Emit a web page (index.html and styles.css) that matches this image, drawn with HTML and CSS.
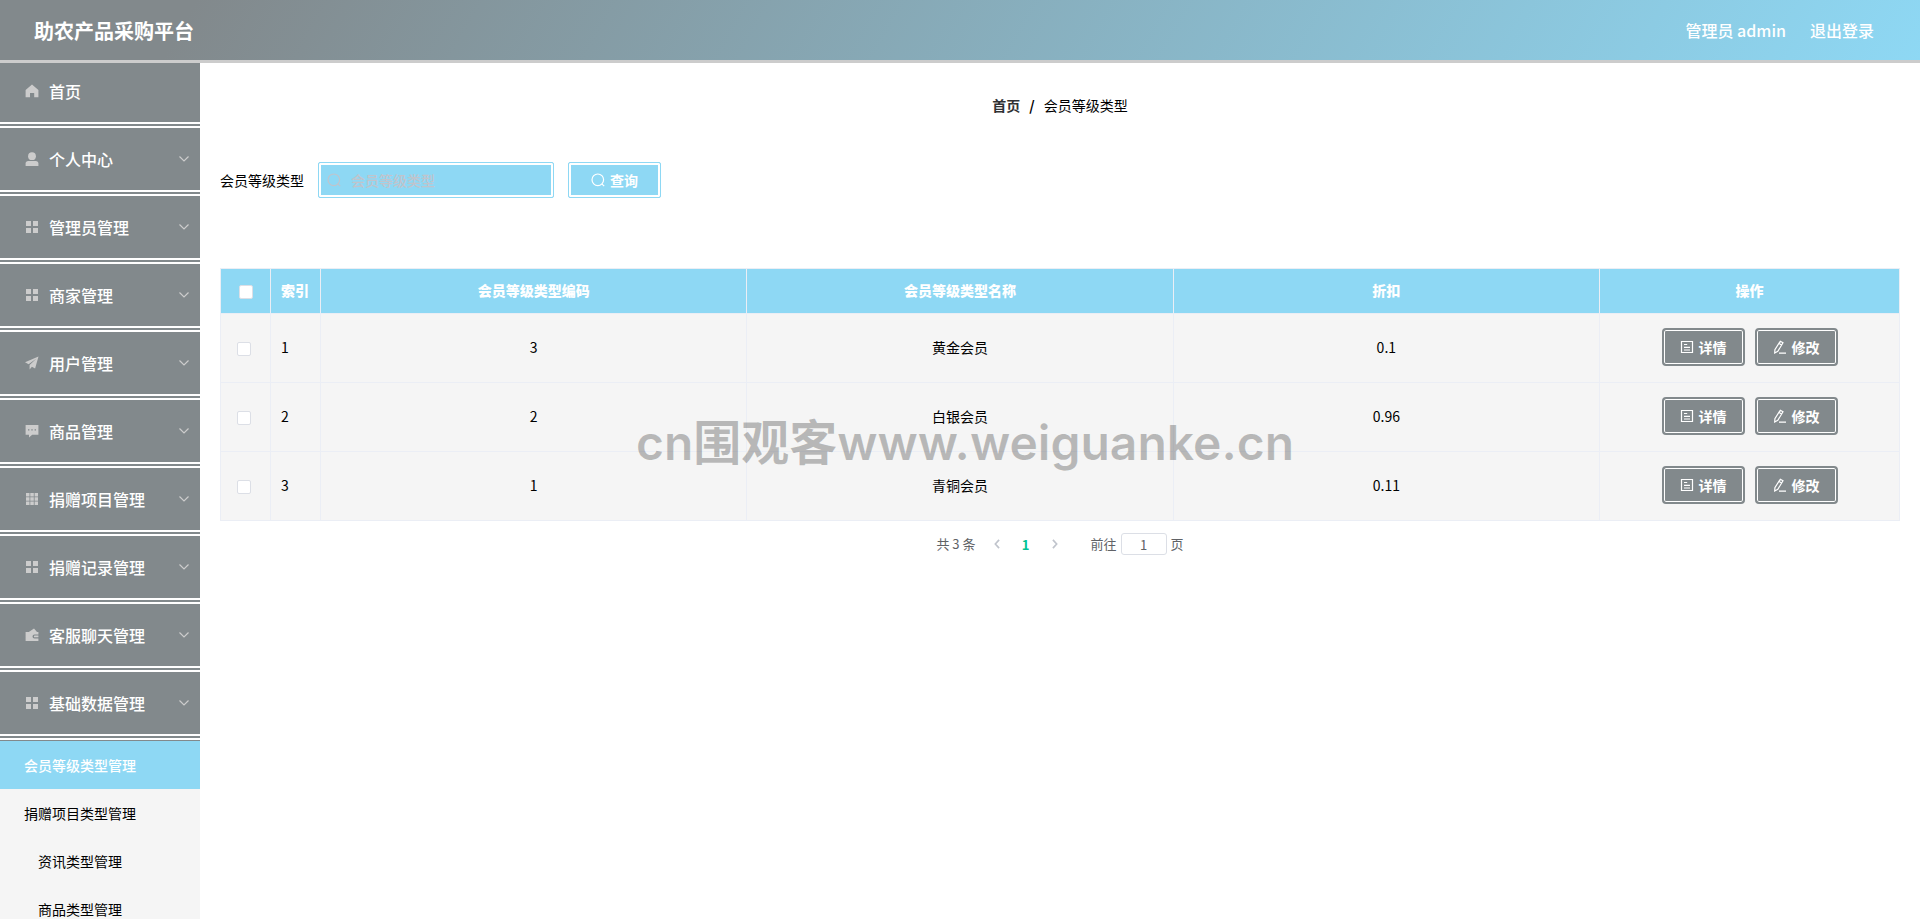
FILE: index.html
```
<!DOCTYPE html>
<html lang="zh-CN">
<head>
  <meta charset="UTF-8">
  <meta name="viewport" content="width=device-width, initial-scale=1.0">
  <title>助农产品采购平台</title>
  <link rel="stylesheet" href="styles.css">
</head>
<body>
  <!-- 图标 -->
  <svg class="sprite" xmlns="http://www.w3.org/2000/svg">
    <symbol id="i-home" viewBox="0 0 14 14"><path d="M7 .5 13.400 6v7.200H9.200V9H5v4.200H.6V6z"/></symbol>
    <symbol id="i-user" viewBox="0 0 14 14"><circle cx="7" cy="4.2" r="3.9"/><path d="M.6 14v-2.4c0-1.600 1-2.600 2.600-2.600h7.600c1.600 0 2.600 1 2.600 2.600V14z"/></symbol>
    <symbol id="i-menu" viewBox="0 0 14 14"><path d="M1 1h5v5H1zM8 1h5v5H8zM1 8h5v5H1zM8 8h5v5H8z"/></symbol>
    <symbol id="i-grid" viewBox="0 0 14 14"><path d="M1 1h3.500v3.500H1zM5.300 1h3.500v3.500H5.300zM9.600 1H13v3.500H9.600zM1 5.300h3.500v3.500H1zM5.300 5.300h3.500v3.500H5.300zM9.600 5.300H13v3.500H9.600zM1 9.600h3.500V13H1zM5.300 9.600h3.500V13H5.300zM9.600 9.600H13V13H9.600z"/></symbol>
    <symbol id="i-send" viewBox="0 0 14 14"><path d="M13.500.6 0 6.200l3.600 2L11.500 2.500 4.600 9v4.600l2.300-2.900 3.200 1.700z"/></symbol>
    <symbol id="i-chat" viewBox="0 0 14 14"><path fill-rule="evenodd" d="M.6 1h12.800v9.800H7.200L4 13.500v-2.700H.6zM3 5.200v1.400h1.400V5.200zm3.300 0v1.400h1.400V5.200zm3.300 0v1.400H11V5.200z"/></symbol>
    <symbol id="i-wallet" viewBox="0 0 14 14"><path fill-rule="evenodd" d="M.6 4h3.200L9 .6 12 4h1.400v2.400H9.500a2 2 0 0 0 0 4h3.900V13H.6zM9.800 7.500h3.600v1.800H9.800a.9.9 0 0 1 0-1.800z"/></symbol>
    <symbol id="i-down" viewBox="0 0 12 12"><path class="line strong" d="M1.500 3.500 6 8l4.500-4.500"/></symbol>
    <symbol id="i-left" viewBox="0 0 12 12"><path class="line bold" d="M8.500 1 4 6l4.500 5"/></symbol>
    <symbol id="i-right" viewBox="0 0 12 12"><path class="line bold" d="M3.500 1 8 6l-4.500 5"/></symbol>
    <symbol id="i-search" viewBox="0 0 14 14"><circle class="line strong" cx="6.800" cy="6.800" r="5.800"/><path class="line strong" d="m10.800 10.800 2.400 2.400"/></symbol>
    <symbol id="i-doc" viewBox="0 0 14 14"><path class="line strong" d="M1.500 1.500h11v11h-11zM4 4.500h3.200M4 7.300h6M4 10h6"/></symbol>
    <symbol id="i-edit" viewBox="0 0 14 14"><path class="line strong" d="M7.300 1.200 10 2.800 4.800 11.400 1.700 13l.2-3.400zM6 3.400l2.700 1.600M6 13.200h7"/></symbol>
  </svg>

  <header class="header">
    <h1 class="title">助农产品采购平台</h1>
    <nav class="header-right">
      <span>管理员 admin</span>
      <a href="#">退出登录</a>
    </nav>
  </header>

  <div class="layout">
    <!-- 左侧菜单 -->
    <aside class="sidebar">
      <ul class="menu">
        <li><a class="menu-item home" href="#"><svg class="icon"><use href="#i-home"/></svg>首页</a></li>
        <li><a class="menu-item" href="#"><svg class="icon"><use href="#i-user"/></svg>个人中心<svg class="arrow"><use href="#i-down"/></svg></a></li>
        <li><a class="menu-item" href="#"><svg class="icon"><use href="#i-menu"/></svg>管理员管理<svg class="arrow"><use href="#i-down"/></svg></a></li>
        <li><a class="menu-item" href="#"><svg class="icon"><use href="#i-menu"/></svg>商家管理<svg class="arrow"><use href="#i-down"/></svg></a></li>
        <li><a class="menu-item" href="#"><svg class="icon"><use href="#i-send"/></svg>用户管理<svg class="arrow"><use href="#i-down"/></svg></a></li>
        <li><a class="menu-item" href="#"><svg class="icon"><use href="#i-chat"/></svg>商品管理<svg class="arrow"><use href="#i-down"/></svg></a></li>
        <li><a class="menu-item" href="#"><svg class="icon"><use href="#i-grid"/></svg>捐赠项目管理<svg class="arrow"><use href="#i-down"/></svg></a></li>
        <li><a class="menu-item" href="#"><svg class="icon"><use href="#i-menu"/></svg>捐赠记录管理<svg class="arrow"><use href="#i-down"/></svg></a></li>
        <li><a class="menu-item" href="#"><svg class="icon"><use href="#i-wallet"/></svg>客服聊天管理<svg class="arrow"><use href="#i-down"/></svg></a></li>
        <li>
          <a class="menu-item" href="#"><svg class="icon"><use href="#i-menu"/></svg>基础数据管理<svg class="arrow"><use href="#i-down"/></svg></a>
          <ul class="submenu">
            <li><a class="submenu-item active" href="#">会员等级类型管理</a></li>
            <li><a class="submenu-item" href="#">捐赠项目类型管理</a></li>
            <li><a class="submenu-item" href="#">资讯类型管理</a></li>
            <li><a class="submenu-item" href="#">商品类型管理</a></li>
          </ul>
        </li>
      </ul>
    </aside>

    <main class="main">
      <nav class="breadcrumb">
        <a href="#">首页</a>
        <span class="separator">/</span>
        <span>会员等级类型</span>
      </nav>

      <!-- 查询 -->
      <form class="search">
        <label for="type-name">会员等级类型</label>
        <div class="search-box">
          <svg class="icon"><use href="#i-search"/></svg>
          <input type="text" id="type-name" placeholder="会员等级类型">
        </div>
        <button type="button" class="btn-search"><svg class="icon"><use href="#i-search"/></svg>查询</button>
      </form>

      <!-- 数据列表 -->
      <table class="table">
        <thead>
          <tr>
            <th class="col-small"><input type="checkbox" class="check" aria-label="全选"></th>
            <th class="col-small col-index">索引</th>
            <th>会员等级类型编码</th>
            <th>会员等级类型名称</th>
            <th>折扣</th>
            <th class="col-action">操作</th>
          </tr>
        </thead>
        <tbody>
          <tr>
            <td class="col-check"><input type="checkbox" class="check" aria-label="选择 1"></td>
            <td class="col-index">1</td>
            <td>3</td>
            <td>黄金会员</td>
            <td>0.1</td>
            <td>
              <div class="actions">
                <button type="button" class="btn"><svg class="icon"><use href="#i-doc"/></svg>详情</button>
                <button type="button" class="btn"><svg class="icon"><use href="#i-edit"/></svg>修改</button>
              </div>
            </td>
          </tr>
          <tr>
            <td class="col-check"><input type="checkbox" class="check" aria-label="选择 2"></td>
            <td class="col-index">2</td>
            <td>2</td>
            <td>白银会员</td>
            <td>0.96</td>
            <td>
              <div class="actions">
                <button type="button" class="btn"><svg class="icon"><use href="#i-doc"/></svg>详情</button>
                <button type="button" class="btn"><svg class="icon"><use href="#i-edit"/></svg>修改</button>
              </div>
            </td>
          </tr>
          <tr>
            <td class="col-check"><input type="checkbox" class="check" aria-label="选择 3"></td>
            <td class="col-index">3</td>
            <td>1</td>
            <td>青铜会员</td>
            <td>0.11</td>
            <td>
              <div class="actions">
                <button type="button" class="btn"><svg class="icon"><use href="#i-doc"/></svg>详情</button>
                <button type="button" class="btn"><svg class="icon"><use href="#i-edit"/></svg>修改</button>
              </div>
            </td>
          </tr>
        </tbody>
      </table>

      <!-- 分页 -->
      <div class="pagination">
        <span>共 3 条</span>
        <div class="pager">
          <button type="button" aria-label="上一页" disabled><svg><use href="#i-left"/></svg></button>
          <button type="button" class="current">1</button>
          <button type="button" aria-label="下一页" disabled><svg><use href="#i-right"/></svg></button>
        </div>
        <label class="jump">前往<input type="text" value="1">页</label>
      </div>
    </main>
  </div>

  <div class="watermark">cn围观客www.weiguanke.cn</div>
</body>
</html>
```

FILE: styles.css
```
* {
  margin: 0;
  padding: 0;
  box-sizing: border-box;
}

body {
  font-family: "Noto Sans CJK SC", sans-serif;
  font-size: 14px;
  color: #000;
  background-color: #fff;
  height: 100vh;
  display: flex;
  flex-direction: column;
  overflow: hidden;
}

a {
  color: inherit;
  text-decoration: none;
}

ul {
  list-style: none;
}

button,
input {
  font-family: inherit;
}

button {
  cursor: pointer;
}

.sprite {
  display: none;
}

.icon {
  width: 14px;
  height: 14px;
  flex: none;
  fill: currentColor;
}

.line {
  fill: none;
  stroke: currentColor;
  stroke-width: 1;
}

.line.strong {
  stroke-width: 1.2;
}

.line.bold {
  stroke-width: 2;
}

/* 顶部 */
.header {
  flex: none;
  height: 63px;
  padding: 0 46px 0 34px;
  display: flex;
  justify-content: space-between;
  align-items: center;
  color: #fff;
  background: linear-gradient(120deg, #82898c 10%, #8ed8f4 100%) border-box;
  border-bottom: 3px solid #ccc;
}

.title {
  font-size: 20px;
  font-weight: bold;
}

.header-right {
  display: flex;
  gap: 24px;
  font-size: 16px;
  font-weight: 500;
}

.layout {
  flex: 1;
  min-height: 0;
  display: flex;
}

/* 左侧菜单 */
.sidebar {
  flex: none;
  width: 200px;
  overflow: hidden;
  background-color: #f5f5f5;
}

.menu-item {
  height: 68px;
  padding: 0 10px 0 25px;
  display: flex;
  align-items: center;
  font-size: 16px;
  font-weight: 500;
  color: #fff;
  background-color: #82898c;
  border-bottom: 6px double #fff;
}

.menu-item.home {
  height: 65px;
  padding-bottom: 3px;
}

.menu-item .icon {
  margin-right: 10px;
  color: #ccc;
}

.menu-item .arrow {
  width: 12px;
  height: 12px;
  margin-left: auto;
  color: #ccc;
}

.submenu {
  border-top: 1px solid #82898c;
}

.submenu-item {
  display: block;
  padding-right: 40px;
  line-height: 48px;
  text-align: center;
}

.submenu-item.active {
  color: #fff;
  font-weight: 500;
  background-color: #8ed8f4;
}

/* 内容区 */
.main {
  flex: 1;
  padding: 32px 20px;
}

.breadcrumb {
  display: flex;
  justify-content: center;
  gap: 9px;
  line-height: 20px;
}

.breadcrumb a {
  color: #303133;
  font-weight: bold;
}

.separator {
  font-weight: bold;
}

.search {
  margin: 47px 0 70px;
  display: flex;
  align-items: center;
}

.search label {
  margin-right: 14px;
}

.search-box {
  width: 236px;
  height: 36px;
  margin-right: 14px;
  padding: 0 8px;
  display: flex;
  align-items: center;
  gap: 10px;
  color: #c0c4cc;
  background-color: #8ed8f4;
  border: 1px solid #8ed8f4;
  border-radius: 2px;
  box-shadow: inset 0 0 0 2px #fff;
}

.search-box input {
  flex: 1;
  min-width: 0;
  font-size: 14px;
  font-weight: 500;
  color: #fff;
  background: none;
  border: none;
  outline: none;
}

.search-box input::placeholder {
  color: #c0c4cc;
}

.btn-search {
  height: 36px;
  padding: 0 22px;
  display: flex;
  align-items: center;
  gap: 5px;
  font-size: 14px;
  font-weight: bold;
  color: #fff;
  background-color: #8ed8f4;
  border: 1px solid #8ed8f4;
  border-radius: 2px;
  box-shadow: inset 0 0 0 2px #fff;
}

.table {
  width: 100%;
  table-layout: fixed;
  border-spacing: 0;
  border-top: 1px solid #ebeef5;
  border-left: 1px solid #ebeef5;
}

.table th,
.table td {
  text-align: center;
  padding-bottom: 2px;
  border-right: 1px solid #ebeef5;
  border-bottom: 1px solid #ebeef5;
}

.table th {
  height: 45px;
  color: #fff;
  font-weight: 900;
  background-color: #8ed8f4;
}

.table td {
  height: 69px;
  background-color: #f5f5f5;
}

.table .col-small {
  width: 50px;
}

.table .col-action {
  width: 300px;
}

.table .col-index {
  padding-left: 10px;
  text-align: left;
}

.table .col-check {
  padding-left: 16px;
  text-align: left;
}

.check {
  appearance: none;
  width: 14px;
  height: 14px;
  display: inline-block;
  vertical-align: middle;
  background-color: #fff;
  border: 1px solid #dcdfe6;
  border-radius: 2px;
}

.actions {
  display: flex;
  justify-content: center;
  gap: 10px;
}

.btn {
  height: 38px;
  padding: 0 16px;
  display: flex;
  align-items: center;
  gap: 5px;
  font-size: 14px;
  font-weight: bold;
  color: #fff;
  background-color: #82898c;
  border: 2px solid #82898c;
  border-radius: 4px;
  box-shadow: inset 0 0 0 1px #fff;
}

/* 分页 */
.pagination {
  margin-top: 12px;
  display: flex;
  justify-content: center;
  align-items: center;
  gap: 10px;
  font-size: 13px;
  line-height: 22px;
  color: #606266;
}

.pager {
  display: flex;
  gap: 7px;
}

.pager button {
  width: 22px;
  height: 22px;
  display: flex;
  justify-content: center;
  align-items: center;
  font-size: 13px;
  color: #c0c4cc;
  background: none;
  border: none;
}

.pager svg {
  width: 10px;
  height: 10px;
}

.pager .current {
  color: #00c292;
  font-weight: bold;
}

.jump {
  margin-left: 15px;
  display: flex;
  align-items: center;
  gap: 4px;
}

.jump input {
  width: 46px;
  height: 22px;
  text-align: center;
  font-size: 13px;
  color: #606266;
  border: 1px solid #dcdfe6;
  border-radius: 3px;
}

/* 水印 */
.watermark {
  position: absolute;
  top: 48%;
  left: 0;
  right: 0;
  margin-top: -30px;
  padding-left: 10px;
  text-align: center;
  font-family: "Inter", "Noto Sans CJK SC", sans-serif;
  font-size: 48px;
  font-weight: 600;
  line-height: 64px;
  white-space: nowrap;
  color: rgba(0, 0, 0, 0.25);
  pointer-events: none;
}
```
